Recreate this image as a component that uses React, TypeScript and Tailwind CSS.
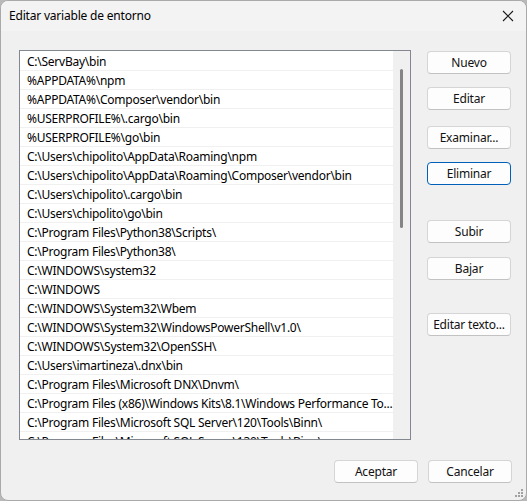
import React from 'react';

const paths = [
  'C:\\ServBay\\bin',
  '%APPDATA%\\npm',
  '%APPDATA%\\Composer\\vendor\\bin',
  '%USERPROFILE%\\.cargo\\bin',
  '%USERPROFILE%\\go\\bin',
  'C:\\Users\\chipolito\\AppData\\Roaming\\npm',
  'C:\\Users\\chipolito\\AppData\\Roaming\\Composer\\vendor\\bin',
  'C:\\Users\\chipolito\\.cargo\\bin',
  'C:\\Users\\chipolito\\go\\bin',
  'C:\\Program Files\\Python38\\Scripts\\',
  'C:\\Program Files\\Python38\\',
  'C:\\WINDOWS\\system32',
  'C:\\WINDOWS',
  'C:\\WINDOWS\\System32\\Wbem',
  'C:\\WINDOWS\\System32\\WindowsPowerShell\\v1.0\\',
  'C:\\WINDOWS\\System32\\OpenSSH\\',
  'C:\\Users\\imartineza\\.dnx\\bin',
  'C:\\Program Files\\Microsoft DNX\\Dnvm\\',
  'C:\\Program Files (x86)\\Windows Kits\\8.1\\Windows Performance To...',
  'C:\\Program Files\\Microsoft SQL Server\\120\\Tools\\Binn\\',
  'C:\\Program Files\\Microsoft SQL Server\\130\\Tools\\Binn\\',
];

const WinButton: React.FC<{ label: string; primary?: boolean; className?: string }> = ({
  label,
  primary,
  className = '',
}) => (
  <button
    type="button"
    className={`h-[23px] w-[84px] rounded-[4px] bg-[#fdfdfd] text-[12px] tracking-[-0.2px] text-[#111] flex items-center justify-center border ${
      primary ? 'border-[#005fb8]' : 'border-[#d5d5d5] border-b-[#c2c2c2]'
    } ${className}`}
  >
    {label}
  </button>
);

export default function App() {
  return (
    <div
      className="w-[527px] h-[501px] bg-[#b9b9b9] overflow-hidden"
      style={{ fontFamily: '"Noto Sans", "Liberation Sans", sans-serif' }}
    >
      <div className="w-[527px] h-[501px] rounded-[8px] border border-[#a9a9a9] bg-[#f0f0f0] flex flex-col overflow-hidden relative">
        {/* title bar */}
        <div className="h-[30px] bg-[#f3f3f3] flex items-center justify-between pl-[8px] pr-[12px] shrink-0">
          <span className="text-[12px] tracking-[-0.2px] text-black">Editar variable de entorno</span>
          <svg width="12" height="12" viewBox="0 0 12 12" className="text-[#1b1b1b]">
            <path d="M1 1 L11 11 M11 1 L1 11" stroke="currentColor" strokeWidth="1.1" fill="none" />
          </svg>
        </div>

        <div className="flex pl-[18px] pt-[19px] gap-[16px]">
          {/* path list */}
          <div className="w-[392px] h-[390px] border border-[#828790] bg-white flex overflow-hidden">
            <div className="flex-1 pt-[1px] overflow-hidden">
              {paths.map((p) => (
                <div
                  key={p}
                  className="h-[19px] border-b border-[#f0f0f0] pl-[7px] text-[12px] tracking-[-0.25px] leading-[20px] text-black whitespace-nowrap overflow-hidden"
                >
                  {p}
                </div>
              ))}
            </div>
            <div className="w-[17px] bg-[#f0f0f0] flex justify-center pt-[18px] shrink-0">
              <div className="w-[3px] h-[159px] rounded-full bg-[#858585]" />
            </div>
          </div>

          {/* actions */}
          <div className="flex flex-col pt-[1px]">
            <WinButton label="Nuevo" />
            <WinButton label="Editar" className="mt-[13px]" />
            <WinButton label="Examinar..." className="mt-[16px]" />
            <WinButton label="Eliminar" primary className="mt-[13px]" />
            <WinButton label="Subir" className="mt-[35px]" />
            <WinButton label="Bajar" className="mt-[14px]" />
            <WinButton label="Editar texto..." className="mt-[33px]" />
          </div>
        </div>

        <div className="flex justify-end gap-[10px] pr-[14px] pt-[20px]">
          <WinButton label="Aceptar" />
          <WinButton label="Cancelar" />
        </div>

        {/* resize grip */}
        <svg width="10" height="10" viewBox="0 0 10 10" className="absolute right-[2px] bottom-[2px]">
          {[
            [8, 2],
            [5, 5],
            [8, 5],
            [2, 8],
            [5, 8],
            [8, 8],
          ].map(([x, y]) => (
            <rect key={`${x}-${y}`} x={x - 1} y={y - 1} width="2" height="2" fill="#a0a0a0" />
          ))}
        </svg>
      </div>
    </div>
  );
}
